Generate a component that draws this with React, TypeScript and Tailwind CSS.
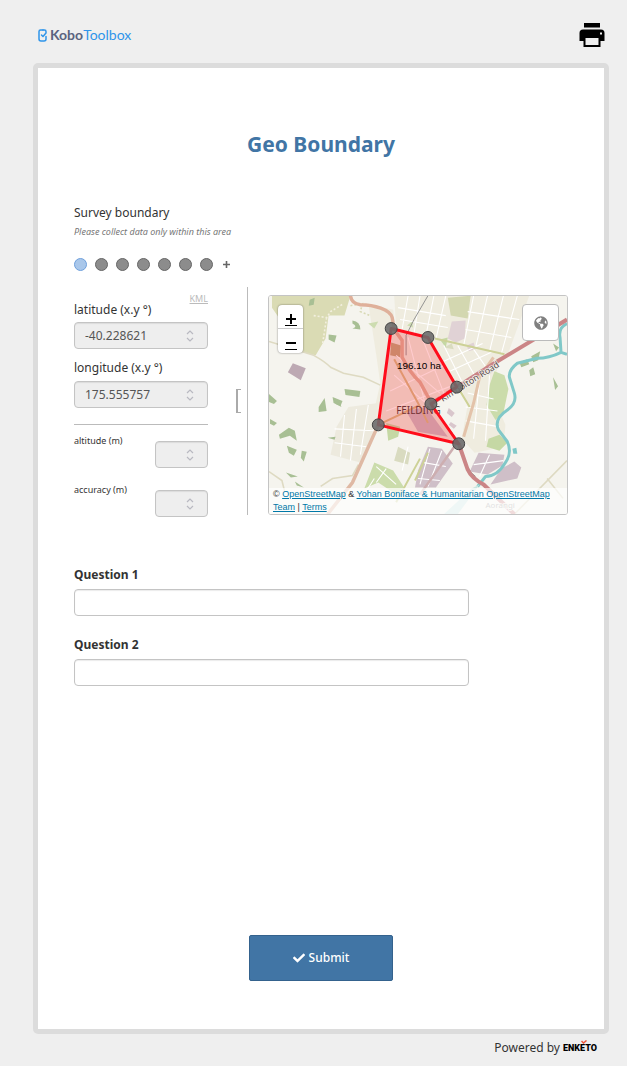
import React from 'react'
import { FaCheck, FaGlobeAmericas } from 'react-icons/fa'

const points = [
  [123, 33],
  [160, 42],
  [189, 92],
  [163, 109],
  [191, 149],
  [110, 130],
]

const Logo = () => {
  return (
    <a href="#" className="flex items-center gap-[3px] font-['Lato',sans-serif] text-[14px] leading-5">
      <svg viewBox="0 0 9 13" className="w-[9px] h-[13px]" fill="none" stroke="#2f95ea" strokeWidth="1.5" strokeLinecap="round" strokeLinejoin="round">
        <path d="M5 1H2.500Q1 1 1 2.500V10Q1 12 3 12H6Q8 12 8 10V7.500" />
        <path d="M5 1H6.500Q8 1 8 2.500V4L5 7.500L3.500 6" />
      </svg>
      <span>
        <span className="font-bold text-[#5a6380]">Kobo</span>
        <span className="text-[#2f95ea]">Toolbox</span>
      </span>
    </a>
  )
}

const Header = () => {
  return (
    <header className="flex items-center justify-between h-[63px] pl-[5px] pr-1 pt-[7px]">
      <Logo />
      <button type="button" aria-label="Print" className="w-[26px] h-[24px]">
        <svg viewBox="0 0 26 24" className="w-full h-full" fill="#000">
          <rect x="5" y="0" width="16" height="4.5" />
          <path fillRule="evenodd" d="M4 6.5H22Q25.5 6.5 25.5 10V18H21.5V24H4.500V18H0.500V10Q0.500 6.500 4 6.500ZM6.500 15V22H19.500V15ZM21 9.500V11.500H23V9.500Z" />
        </svg>
      </button>
    </header>
  )
}

const inputStyle =
  'block w-full h-[27px] rounded border border-[#c4c4c4] shadow-[inset_0_1px_1px_rgba(0,0,0,0.08)] outline-none'

const NumberInput = ({ id, value }: { id: string; value?: string }) => {
  return (
    <div className="relative w-full">
      <input
        id={id}
        type="number"
        readOnly
        defaultValue={value}
        className={inputStyle + ' bg-[#eeeeee] pl-[10px] pr-6 text-[12px] text-[#555] [appearance:textfield] [&::-webkit-inner-spin-button]:appearance-none'}
      />
      <svg viewBox="0 0 8 12" className="absolute right-[14px] top-2 w-2 h-3" fill="none" stroke="#b9b9c1" strokeWidth="1.2">
        <path d="M1 4L4 1L7 4M1 8L4 11L7 8" />
      </svg>
    </div>
  )
}

const GeoPoints = () => {
  return (
    <div className="flex items-center mt-[18px] h-[14px] gap-2">
      {points.concat([points[0]]).map((_, i) => (
        <button
          key={i}
          type="button"
          aria-label={'Point ' + (i + 1)}
          className={
            'w-[13px] h-[13px] rounded-full border ' +
            (i === 0 ? 'bg-[#a9c7ea] border-[#6fa0dc]' : 'bg-[#8c8c8c] border-[#666]')
          }
        />
      ))}
      <button type="button" aria-label="Add point" className="ml-0.5 w-[7px] h-[7px]">
        <svg viewBox="0 0 7 7" className="w-full h-full" stroke="#666" strokeWidth="1.6">
          <path d="M3.5 0V7M0 3.5H7" />
        </svg>
      </button>
    </div>
  )
}

const MapTiles = () => {
  return (
    <svg viewBox="0 0 300 220" preserveAspectRatio="xMidYMid slice" className="block w-full h-full" fill="none">
      <rect width="300" height="220" fill="#f5f4ee" />

      {/* built up areas */}
      <path fill="#efecdf" d="M100 8L125 14L128 40L116 90L111 126L104 124L112 88L108 60Z" />
      <path fill="#efecdf" d="M126 0H262L240 60L190 92L160 42L128 32Z" />
      <path fill="#efecdf" d="M193 92L232 62L225 100L238 130L236 152L207 158L194 144L200 110Z" />
      <path fill="#edeade" d="M80 112L110 108L104 142L92 168L62 160L68 132Z" />
      <path fill="#efecdf" d="M118 34L160 42L189 92L163 109L191 149L110 130Z" />

      {/* parks and farmland */}
      <path fill="#dadbb4" d="M3 0H82L76 20H60L57 43L47 60L34 57L3 12Z" />
      <path fill="#d3d7b0" d="M180 2L203 0L200 23L183 20Z" />
      <path fill="#cbdcab" d="M227 76L237 80L241 94L236 118L228 125L219 110L222 90Z" />
      <path fill="#cbdcab" d="M106 168L125 176L136 193L128 200L110 188L96 194Z" />
      <path fill="#c5d8a4" d="M118 128L132 132L130 142L120 146Z M172 44L180 42L178 52Z M221 144L232 140L240 148L232 156L219 152Z" />
      <path fill="#d9dbc0" d="M130 152L142 158L140 170L126 166Z M176 52L184 48L186 54Z" />
      <g fill="#a8bf94">
        <path d="M41 4L46 2L45 9L40 10Z" />
        <path d="M84 25Q92 26 92 34L84 33Q90 31 84 28Z" />
        <path d="M60 39L68 40L66 47L60 44Z" />
        <path d="M76 94L92 96L91 102L77 100Z" />
        <path d="M64 102L74 106L72 111L65 108Z" />
        <path d="M50 112L56 103L58 116L50 117Z M66 103L71 108L73 112L67 109Z" />
        <path d="M0 99L8 106L5 109L0 107Z M1 124L8 128L5 131L1 129Z" />
        <path d="M10 140L20 133L26 136L28 146L21 141L11 144Z" />
        <path d="M18 151L28 155L25 161L20 158Z M33 156L38 157L35 167L32 163Z" />
        <path d="M17 178L29 182L22 183Z M26 187L35 193L28 191Z M59 143L67 142L66 145Z" />
        <path d="M100 28L110 26L106 33Z M139 30L144 26L145 32Z" fill="#cddcb0" />
        <path d="M252 67L260 64L262 69L254 72Z M264 61L273 56L271 65L266 67Z M262 75L266 72L268 79L263 81Z M286 48L292 52L289 56Z M286 82L291 91L288 95Z" />
      </g>

      {/* industrial */}
      <g fill="#bda9b3">
        <path d="M24 68L37 73L32 85L19 77Z" />
        <path fill="#e0d2d5" d="M184 26L198 25L197 43L188 47L180 43Z M199 50L206 47L208 54L201 56Z M214 74L222 70L224 78L215 80Z" />
        <path fill="#d9c6cc" d="M181 113L187 118L184 122L179 118Z M183 127L189 131L186 134L181 130Z" />
        <path fill="#cfbfc8" d="M160 152L174 154L185 169L168 193L147 193L150 176Z" />
        <path fill="#cfbfc8" d="M202 177L211 158L237 160L235 171L220 180Z" />
        <path fill="#cfbfc8" d="M223 190L234 174L247 167L254 173L250 184L236 187Z" />
        <path fill="#cdbac4" d="M138 116L158 112L180 142L150 137Z" />
      </g>
      <path fill="#c2a77e" d="M123 47L133 50L132 62L122 60Z" />

      {/* streets */}
      <g stroke="#fff" strokeWidth="1.1">
        <path d="M130 12L178 20M132 24L180 32M140 0L134 34M152 0L146 38M166 0L158 40M178 0L168 44M206 0L196 50M220 0L208 52M236 0L222 56M250 0L234 58M200 16L252 24M198 34L244 42" />
        <path d="M176 66L215 48M182 76L226 56M176 50L196 90M190 50L208 82M206 54L220 74M200 98L226 104M198 112L230 116M198 126L232 132M212 84L206 144M222 80L218 146" />
        <path d="M66 134L106 136M66 148L98 152M76 120L72 162M88 114L82 166M100 110L92 160" />
        <path d="M128 60L172 98M126 80L160 110M122 96L176 70M118 116L186 90M140 42L158 112M154 42L176 98" />
        <path d="M156 168L178 172M162 154L152 190M174 156L160 192M206 170L236 166M222 160L212 182M150 184L172 186" />
        <path d="M108 172L128 190M118 174L108 188M140 152L134 176M106 184L92 206" />
      </g>
      <path stroke="#f2efdf" strokeWidth="1.6" strokeDasharray="2 2" d="M45 20L58 22L62 16L75 8M58 22L54 48" />
      <path stroke="#d8d9b4" strokeWidth="1.6" strokeDasharray="2 2" d="M82 10L94 8L92 16L102 20" />
      <path stroke="#dedac2" strokeWidth="1.6" d="M0 46L45 60Q56 66 62 72L75 78L95 82L112 90M0 177L13 186L16 198M52 192L64 184L84 181L90 170M300 166L247 220M280 184L296 204" />
      <path stroke="#cdd196" strokeWidth="2" d="M167 43L237 59M190 92L202 112M147 186L160 158M152 164L128 208" />
      <path stroke="#d9bb86" strokeWidth="2" d="M110 130L152 110M126 64L150 108L160 128" />
      <path stroke="#e3c3aa" strokeWidth="3" d="M226 62L212 82L206 108L196 142" />
      <path stroke="#dfb9a4" strokeWidth="3.500" d="M110 130L84 188L59 220" />
      <path stroke="#dfb09a" strokeWidth="3.500" d="M82 0Q83 8 92 9C106 9 122 14 124 22L126 34L134 45V62Q142 78 152 87L164 109" />
      <path stroke="#cdaeb0" strokeWidth="2.500" d="M188 150L152 200" />
      <path stroke="#888" strokeWidth="0.9" d="M160 0L146 24L138 40V60M163 109L193 150Q198 176 208 182" />

      {/* river */}
      <path stroke="#80c8c8" strokeWidth="3" strokeLinejoin="round" d="M300 28Q291 32 293 42L294 57L300 59M294 57Q282 63 270 63L250 68Q241 75 242 82L247 98Q250 108 240 115Q226 124 231 135L240 147Q245 158 238 168Q230 182 218 182L210 192" />
      <path fill="#c8e5df" d="M212 190L204 194L176 220H190Z" />
      <path fill="#80c8c8" d="M245 154L249 153L250 159L246 159Z" />

      {/* main road */}
      <path stroke="#cb8586" strokeWidth="4" d="M300 24L230 66L189 92L163 109M191 149L200 175Q204 184 216 190L247 220" />

      <g fontFamily="'Noto Sans', sans-serif" fill="#5c4a4a" stroke="#f5f4ee" strokeWidth="1.5" paintOrder="stroke">
        <text x="175" y="107" fontSize="9" transform="rotate(-32 175 107)">Kimbolton Road</text>
        <text x="218" y="214" fontSize="8" fill="#999">Aorangi</text>
      </g>
      <text x="128" y="119" fontSize="10" fontFamily="'Noto Sans', sans-serif" fill="#4a3c3c">FEILDING</text>

      {/* surveyed area */}
      <polygon points={points.map((p) => p.join(',')).join(' ')} fill="#ff1020" fillOpacity="0.22" stroke="#ff0d1b" strokeWidth="3" strokeLinejoin="round" />
      {points.map(([x, y]) => (
        <circle key={x} cx={x} cy={y} r="6" fill="#6b6b6b" fillOpacity="0.9" stroke="#444" />
      ))}
      <text x="151" y="74" fontSize="10" textAnchor="middle" fontFamily="'Liberation Sans', sans-serif" fill="#000">196.10 ha</text>
    </svg>
  )
}

const linkStyle = 'text-[#0078a8] underline'

const GeoMap = () => {
  return (
    <div className="relative flex-1 mt-2 ml-5 h-[220px] rounded-[3px] border border-[#c4c4c4] overflow-hidden">
      <MapTiles />
      <div className="absolute left-[9px] top-[9px] w-[25px] rounded-sm bg-white shadow-[0_0_2px_rgba(0,0,0,0.5)] text-black">
        <button type="button" aria-label="Zoom in" className="flex items-center justify-center w-full h-6 border-b border-[#ccc]">
          <svg viewBox="0 0 12 14" className="w-3 h-[14px] mt-1.5" stroke="#000">
            <path strokeWidth="2" d="M6 1V11M1 6H11" />
            <path strokeWidth="1" d="M0 12.500H12" />
          </svg>
        </button>
        <button type="button" aria-label="Zoom out" className="flex items-center justify-center w-full h-6">
          <svg viewBox="0 0 12 14" className="w-3 h-[14px] mt-1.5" stroke="#000">
            <path strokeWidth="2" d="M1 6H11" />
            <path strokeWidth="1" d="M0 12.500H12" />
          </svg>
        </button>
      </div>
      <button type="button" aria-label="Layers" className="absolute right-2 top-2 flex items-center justify-center w-[37px] h-[37px] rounded border border-[#bbb] bg-white text-[#808080]">
        <FaGlobeAmericas size={14} />
      </button>
      <div className="absolute left-0 right-0 bottom-0 pl-1 bg-white/70 font-['Liberation_Sans',sans-serif] text-[9px] leading-[13px] text-[#333]">
        © <a href="#" className={linkStyle}>OpenStreetMap</a> &amp;{' '}
        <a href="#" className={linkStyle}>Yohan Boniface &amp; Humanitarian OpenStreetMap Team</a> |{' '}
        <a href="#" className={linkStyle}>Terms</a>
      </div>
    </div>
  )
}

const GeoWidget = () => {
  return (
    <div className="flex mt-4">
      <div className="w-[134px] pt-[6px]">
        <div className="flex justify-between h-[26px]">
          <label htmlFor="lat" className="self-end leading-[18px]">latitude (x.y °)</label>
          <a href="#" className="self-start text-[9px] leading-3 text-[#bbb] underline">KML</a>
        </div>
        <div className="mt-[3px]">
          <NumberInput id="lat" value="-40.228621" />
        </div>
        <label htmlFor="long" className="block mt-[10px] mb-1 leading-[18px]">longitude (x.y °)</label>
        <NumberInput id="long" value="175.555757" />
        <hr className="mt-4 border-[#bbb]" />
        <div className="flex justify-between mt-[9px]">
          <label htmlFor="alt" className="text-[9px] leading-[14px]">altitude (m)</label>
          <div className="w-[53px] mt-[7px]">
            <NumberInput id="alt" />
          </div>
        </div>
        <div className="flex justify-between mt-[15px]">
          <label htmlFor="acc" className="text-[9px] leading-[14px]">accuracy (m)</label>
          <div className="w-[53px] mt-[7px]">
            <NumberInput id="acc" />
          </div>
        </div>
      </div>
      <div className="flex items-center justify-end w-10 mb-0.5 pr-[6px] border-r border-[#bbb]">
        <button type="button" aria-label="Hide map" className="w-[5px] h-6 border-l-2 border-y border-[#aaa]" />
      </div>
      <GeoMap />
    </div>
  )
}

const Question = ({ id, label }: { id: string; label: string }) => {
  return (
    <div>
      <label htmlFor={id} className="block mb-[5px] leading-[18px] font-bold">{label}</label>
      <div className="w-4/5">
        <input id={id} type="text" className={inputStyle + ' bg-white px-2'} />
      </div>
    </div>
  )
}

const App = () => {
  return (
    <div className="min-h-screen bg-[#efefef] pl-[33px] pr-[18px] pb-2 font-['Noto_Sans',sans-serif] text-[12px] text-[#333]">
      <Header />
      <form className="px-9 pt-16 pb-12 bg-white border-5 border-[#dcdcdc] rounded-[5px]">
        <h1 className="text-center text-[21px] leading-6 font-bold text-[#4175a5]">Geo Boundary</h1>
        <div className="mt-12 leading-[18px]">Survey boundary</div>
        <div className="mt-[3px] text-[9px] leading-[14px] italic text-[#777]">Please collect data only within this area</div>
        <GeoPoints />
        <GeoWidget />
        <div className="flex flex-col gap-5 mt-[49px]">
          <Question id="q1" label="Question 1" />
          <Question id="q2" label="Question 2" />
        </div>
        <button type="button" className="flex items-center justify-center gap-1 w-36 h-[46px] mx-auto mt-[249px] rounded-xs border border-[#34628d] bg-[#4175a5] font-medium text-white">
          <FaCheck size={12} />
          Submit
        </button>
      </form>
      <footer className="flex items-center justify-end gap-[3px] pt-1 pr-3 leading-5">
        <span>Powered by</span>
        <a href="#" className="relative font-['Roboto',sans-serif] text-[9px] font-black text-black">
          ENKETO
          <svg viewBox="0 0 6 4" className="absolute left-[18px] top-[2px] w-[6px] h-1" fill="none" stroke="#f0563a" strokeWidth="1.5">
            <path d="M0.500 1L2.500 3L5.500 0.500" />
          </svg>
        </a>
      </footer>
    </div>
  )
}

export default App
